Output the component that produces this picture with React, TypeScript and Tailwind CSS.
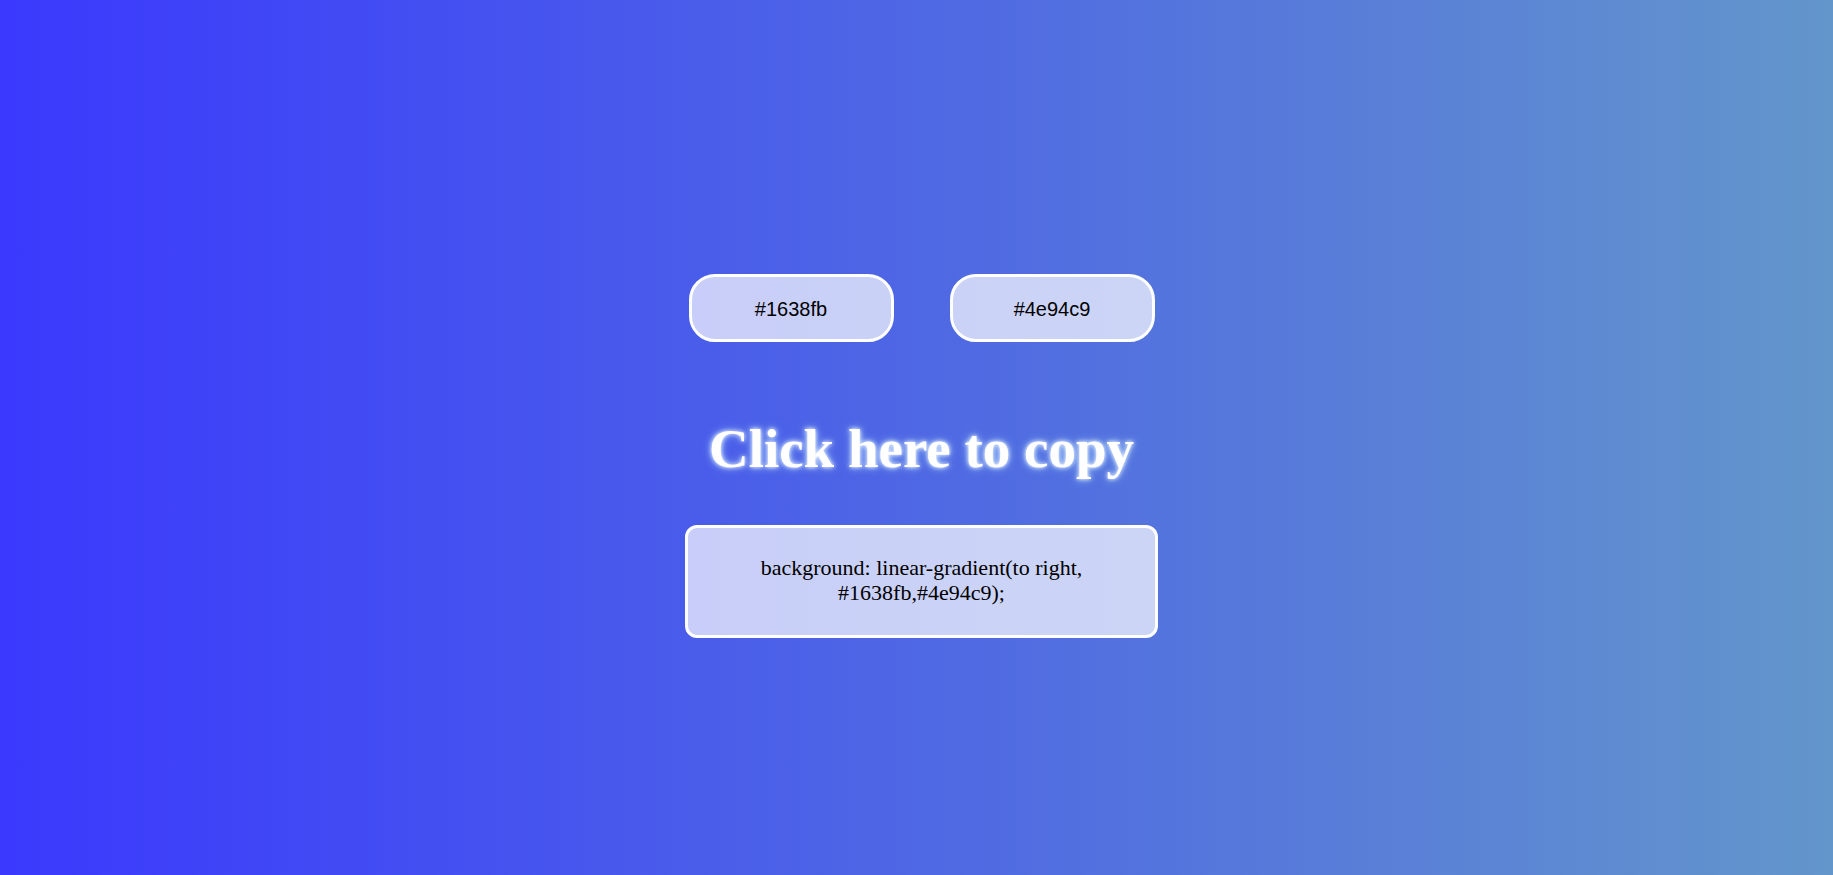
import React from "react";

const ColorButton = ({ value }: { value: string }) => {
  return (
    <button className="w-[205px] h-[68px] rounded-[26px] border-[3px] border-white bg-white/70 pt-[2px] text-[20px] text-black font-['Liberation_Sans',Arial,sans-serif]">
      {value}
    </button>
  );
};

const App = () => {
  return (
    <div className="min-h-screen w-full bg-[linear-gradient(to_right,#3a39fd,#6396cb)] flex flex-col items-center pt-[274px] pl-[10px]">
      <div className="flex gap-[56px]">
        <ColorButton value="#1638fb" />
        <ColorButton value="#4e94c9" />
      </div>

      <h1 className="mt-[75px] h-[63px] leading-[63px] text-[55px] font-bold text-white font-['Liberation_Serif','Times_New_Roman',serif] [text-shadow:0_0_4px_#ffffff,0_0_9px_#a9d8ff]">
        Click here to copy
      </h1>

      <div className="mt-[45px] w-[473px] h-[113px] rounded-[12px] border-[3px] border-white bg-white/70 flex items-center justify-center px-6 pb-[4px]">
        <p className="text-center text-[22px] leading-[25px] text-black font-['Liberation_Serif','Times_New_Roman',serif]">
          background: linear-gradient(to right, #1638fb,#4e94c9);
        </p>
      </div>
    </div>
  );
};

export default App;
